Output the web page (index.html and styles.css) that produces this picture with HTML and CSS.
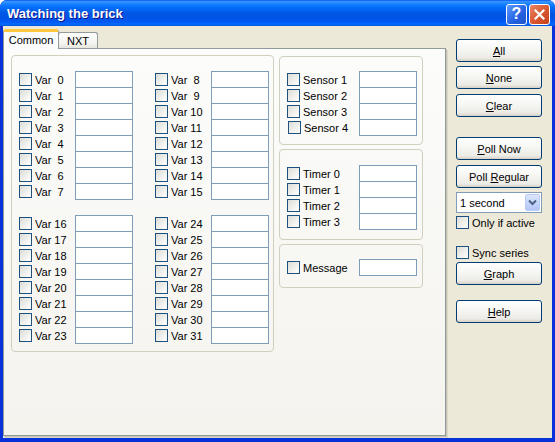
FILE: index.html
```html
<!DOCTYPE html>
<html>
<head>
<meta charset="utf-8">
<title>Watching the brick</title>
<link rel="stylesheet" href="styles.css">
</head>
<body>
<div class="window">
  <div class="titlebar">
    <span class="title">Watching the brick</span>
    <span class="tb-btn tb-help">?</span>
    <span class="tb-btn tb-close"><svg width="13" height="13" viewBox="0 0 13 13"><path d="M2.5 2.5 L10.5 10.5 M10.5 2.5 L2.5 10.5" stroke="#fff" stroke-width="2.2" stroke-linecap="square"/></svg></span>
  </div>
  <div class="client">
    <div class="tabarea">
      <div class="tabs">
        <div class="tab tab-active">Common</div>
        <div class="tab tab-inactive">NXT</div>
      </div>
      <div class="panel">
        <div class="group vars">
          <div class="varblock">
            <div class="col">
              <div class="row"><span class="cb"></span><span class="lbl">Var  0</span><span class="field"></span></div>
              <div class="row"><span class="cb"></span><span class="lbl">Var  1</span><span class="field"></span></div>
              <div class="row"><span class="cb"></span><span class="lbl">Var  2</span><span class="field"></span></div>
              <div class="row"><span class="cb"></span><span class="lbl">Var  3</span><span class="field"></span></div>
              <div class="row"><span class="cb"></span><span class="lbl">Var  4</span><span class="field"></span></div>
              <div class="row"><span class="cb"></span><span class="lbl">Var  5</span><span class="field"></span></div>
              <div class="row"><span class="cb"></span><span class="lbl">Var  6</span><span class="field"></span></div>
              <div class="row"><span class="cb"></span><span class="lbl">Var  7</span><span class="field"></span></div>
            </div>
            <div class="col">
              <div class="row"><span class="cb"></span><span class="lbl">Var  8</span><span class="field"></span></div>
              <div class="row"><span class="cb"></span><span class="lbl">Var  9</span><span class="field"></span></div>
              <div class="row"><span class="cb"></span><span class="lbl">Var 10</span><span class="field"></span></div>
              <div class="row"><span class="cb"></span><span class="lbl">Var 11</span><span class="field"></span></div>
              <div class="row"><span class="cb"></span><span class="lbl">Var 12</span><span class="field"></span></div>
              <div class="row"><span class="cb"></span><span class="lbl">Var 13</span><span class="field"></span></div>
              <div class="row"><span class="cb"></span><span class="lbl">Var 14</span><span class="field"></span></div>
              <div class="row"><span class="cb"></span><span class="lbl">Var 15</span><span class="field"></span></div>
            </div>
          </div>
          <div class="varblock">
            <div class="col">
              <div class="row"><span class="cb"></span><span class="lbl">Var 16</span><span class="field"></span></div>
              <div class="row"><span class="cb"></span><span class="lbl">Var 17</span><span class="field"></span></div>
              <div class="row"><span class="cb"></span><span class="lbl">Var 18</span><span class="field"></span></div>
              <div class="row"><span class="cb"></span><span class="lbl">Var 19</span><span class="field"></span></div>
              <div class="row"><span class="cb"></span><span class="lbl">Var 20</span><span class="field"></span></div>
              <div class="row"><span class="cb"></span><span class="lbl">Var 21</span><span class="field"></span></div>
              <div class="row"><span class="cb"></span><span class="lbl">Var 22</span><span class="field"></span></div>
              <div class="row"><span class="cb"></span><span class="lbl">Var 23</span><span class="field"></span></div>
            </div>
            <div class="col">
              <div class="row"><span class="cb"></span><span class="lbl">Var 24</span><span class="field"></span></div>
              <div class="row"><span class="cb"></span><span class="lbl">Var 25</span><span class="field"></span></div>
              <div class="row"><span class="cb"></span><span class="lbl">Var 26</span><span class="field"></span></div>
              <div class="row"><span class="cb"></span><span class="lbl">Var 27</span><span class="field"></span></div>
              <div class="row"><span class="cb"></span><span class="lbl">Var 28</span><span class="field"></span></div>
              <div class="row"><span class="cb"></span><span class="lbl">Var 29</span><span class="field"></span></div>
              <div class="row"><span class="cb"></span><span class="lbl">Var 30</span><span class="field"></span></div>
              <div class="row"><span class="cb"></span><span class="lbl">Var 31</span><span class="field"></span></div>
            </div>
          </div>
        </div>
        <div class="rcol">
          <div class="group sgroup sensors">
            <div class="row srow"><span class="cb"></span><span class="lbl">Sensor 1</span><span class="field"></span></div>
            <div class="row srow"><span class="cb"></span><span class="lbl">Sensor 2</span><span class="field"></span></div>
            <div class="row srow"><span class="cb"></span><span class="lbl">Sensor 3</span><span class="field"></span></div>
            <div class="row srow"><span class="cb cb-shift"></span><span class="lbl">Sensor 4</span><span class="field"></span></div>
          </div>
          <div class="group sgroup timers">
            <div class="row srow"><span class="cb"></span><span class="lbl">Timer 0</span><span class="field"></span></div>
            <div class="row srow"><span class="cb"></span><span class="lbl">Timer 1</span><span class="field"></span></div>
            <div class="row srow"><span class="cb"></span><span class="lbl">Timer 2</span><span class="field"></span></div>
            <div class="row srow"><span class="cb"></span><span class="lbl">Timer 3</span><span class="field"></span></div>
          </div>
          <div class="group sgroup message">
            <div class="row srow"><span class="cb"></span><span class="lbl">Message</span><span class="field"></span></div>
          </div>
        </div>
      </div>
    </div>
    <div class="side">
      <div class="btn btn-all"><span><u>A</u>ll</span></div>
      <div class="btn btn-none"><span><u>N</u>one</span></div>
      <div class="btn btn-clear"><span><u>C</u>lear</span></div>
      <div class="btn btn-pollnow"><span><u>P</u>oll Now</span></div>
      <div class="btn btn-pollreg"><span>Poll <u>R</u>egular</span></div>
      <div class="select">
        <span class="select-text">1 second</span>
        <span class="select-arrow"><svg width="9" height="7" viewBox="0 0 9 7"><path d="M1 1.5 L4.5 5 L8 1.5" fill="none" stroke="#4D6185" stroke-width="2"/></svg></span>
      </div>
      <div class="crow crow-active"><span class="cb"></span><span class="clbl">Only if active</span></div>
      <div class="crow crow-sync"><span class="cb"></span><span class="clbl">Sync series</span></div>
      <div class="btn btn-graph"><span><u>G</u>raph</span></div>
      <div class="btn btn-help"><span><u>H</u>elp</span></div>
    </div>
  </div>
</div>
</body>
</html>
```
FILE: styles.css
```css
* { box-sizing: border-box; }
html, body { margin: 0; padding: 0; }
body {
  background: #ffffff;
  font-family: "Liberation Sans", Arial, sans-serif;
  font-size: 11px;
  color: #000;
}
.window {
  width: 555px;
  height: 442px;
  display: flex;
  flex-direction: column;
  background: #0831D9;
  border-radius: 7px 7px 0 0;
  overflow: hidden;
}
.titlebar {
  height: 26px;
  flex: none;
  display: flex;
  align-items: center;
  padding: 0 5px 0 7px;
  background: linear-gradient(to bottom, #0058EE 0%, #3A93FF 6%, #288EFF 10%, #127DFF 18%, #036FFC 28%, #0262EE 40%, #0057E5 52%, #0054E3 62%, #0055EB 76%, #005BF5 86%, #026AFE 92%, #0062EF 96%, #0052D6 100%);
}
.title {
  flex: 1;
  color: #fff;
  font-weight: bold;
  font-size: 13px;
  text-shadow: 1px 1px 0 #0F1089;
  padding-top: 1px;
}
.tb-btn {
  width: 21px;
  height: 21px;
  border: 1px solid #fff;
  border-radius: 3px;
  display: flex;
  align-items: center;
  justify-content: center;
  margin-left: 2px;
  margin-top: 2px;
}
.tb-help {
  background: linear-gradient(135deg, #5C9BFF, #2361E1 60%, #1E55CB);
  color: #fff;
  font-weight: bold;
  font-size: 16px;
}
.tb-close {
  background: linear-gradient(135deg, #E8876A, #DA5A32 50%, #C4401A);
}
.client {
  flex: 1;
  margin: 0 3px 4px 3px;
  background: #ECE9D8;
  display: flex;
  padding-top: 3px;
}
.tabarea {
  width: 443px;
  flex: none;
  display: flex;
  flex-direction: column;
}
.tabs {
  height: 19px;
  display: flex;
  align-items: flex-end;
  position: relative;
  z-index: 1;
}
.tab {
  border: 1px solid #919B9C;
  border-bottom: none;
  border-radius: 3px 3px 0 0;
  display: flex;
  justify-content: center;
  align-items: center;
}
.tab-active {
  width: 56px;
  height: 20px;
  margin-bottom: -1px;
  background: #FCFCFE;
  border-top: 3px solid #FFC83C;
  padding-bottom: 1px;
}
.tab-inactive {
  width: 40px;
  height: 16px;
  margin-left: -1px;
  background: linear-gradient(#FFFFFF, #F3F3EF 70%, #E6E5DD);
  padding-top: 1px;
}
.panel {
  height: 388px;
  border: 1px solid #919B9C;
  box-shadow: 1px 1px 0 #C4C2B3, 2px 2px 0 #DCD9C8;
  background: linear-gradient(#FCFCFB, #F4F3EE);
  display: flex;
  align-items: flex-start;
  padding: 6px 0 0 7px;
}
.group {
  border: 1px solid #D0D0BF;
  border-radius: 4px;
}
.vars {
  width: 263px;
  height: 297px;
  padding: 15px 0 0 7px;
  display: flex;
  flex-direction: column;
  gap: 16px;
}
.varblock {
  display: flex;
  gap: 22px;
}
.col {
  width: 114px;
  display: flex;
  flex-direction: column;
}
.row {
  height: 16px;
  display: flex;
  align-items: flex-start;
}
.cb {
  width: 13px;
  height: 13px;
  flex: none;
  border: 1px solid #1C5180;
  background: linear-gradient(135deg, #DCDCD7 0%, #EEEEEA 50%, #FFFFFF 100%);
  margin-top: 2px;
}
.cb-shift { margin-left: 1px; }
.lbl {
  flex: 1;
  margin-left: 3px;
  line-height: 16px;
  white-space: pre;
  padding-top: 1px;
}
.field {
  width: 58px;
  height: 17px;
  flex: none;
  border: 1px solid #7F9DB9;
  background: #fff;
}
.rcol {
  width: 144px;
  margin-left: 5px;
  margin-top: 1px;
  display: flex;
  flex-direction: column;
  gap: 4px;
}
.sgroup {
  padding-left: 7px;
}
.srow { width: 130px; }
.sensors { height: 89px; padding-top: 14px; }
.timers { height: 91px; padding-top: 15px; }
.message { height: 44px; padding-top: 14px; }
.side {
  width: 86px;
  margin-left: 10px;
  display: flex;
  flex-direction: column;
}
.btn {
  height: 23px;
  width: 86px;
  flex: none;
  border: 1px solid #003C74;
  border-radius: 3px;
  background: linear-gradient(#FFFFFF 0%, #F7F7F4 40%, #ECEBE6 85%, #D6D0C5 100%);
  display: flex;
  align-items: center;
  justify-content: center;
  padding-top: 1px;
}
.btn-all { margin-top: 10px; }
.btn-none { margin-top: 4px; }
.btn-clear { margin-top: 5px; }
.btn-pollnow { margin-top: 20px; }
.btn-pollreg { margin-top: 5px; }
.btn-graph { margin-top: 3px; }
.btn-help { margin-top: 15px; }
.select {
  margin-top: 4px;
  height: 21px;
  border: 1px solid #7F9DB9;
  background: #fff;
  display: flex;
  align-items: center;
  padding: 0 1px 0 3px;
}
.select-text { flex: 1; padding-top: 1px; }
.select-arrow {
  width: 15px;
  height: 17px;
  border: 1px solid #B9CBF5;
  border-radius: 2px;
  background: linear-gradient(#DDE7FD, #C1D3FB 60%, #B4C8F6);
  display: flex;
  align-items: center;
  justify-content: center;
}
.crow {
  height: 13px;
  display: flex;
  align-items: center;
}
.crow .cb { margin-top: 0; }
.crow-active { margin-top: 3px; }
.crow-sync { margin-top: 17px; }
.clbl { margin-left: 3px; white-space: nowrap; padding-top: 1px; }
```
